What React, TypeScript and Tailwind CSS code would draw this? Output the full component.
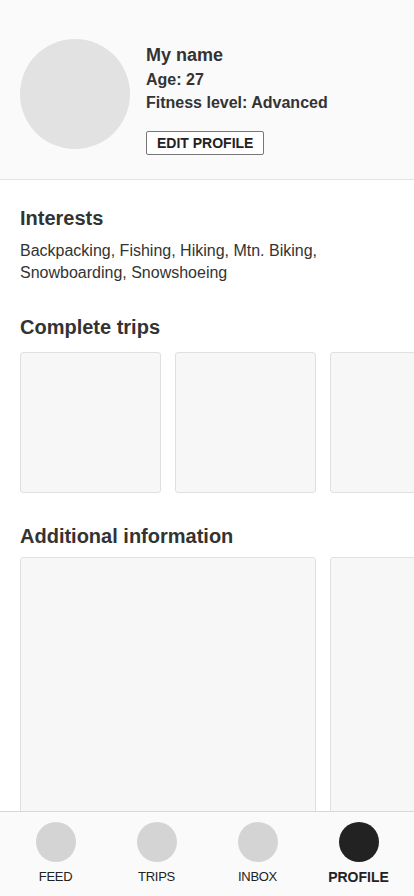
const font = { fontFamily: '"Liberation Sans", Arial, sans-serif' };

function NavItem({ label, active }: { label: string; active?: boolean }) {
  return (
    <div className="flex flex-col items-center">
      <div className={`w-10 h-10 rounded-full ${active ? 'bg-[#222222]' : 'bg-[#d4d4d4]'}`} />
      <span
        className={`mt-[7px] leading-[16px] text-[#222222] ${active ? 'text-[14px] font-bold' : 'text-[13px] font-normal tracking-[-0.3px]'}`}
      >
        {label}
      </span>
    </div>
  );
}

export default function App() {
  const trips = [1, 2, 3];
  const extras = [1, 2];

  return (
    <div className="h-[896px] w-[414px] flex flex-col overflow-hidden bg-white text-[#333333]" style={font}>
      <div className="flex-1 overflow-hidden">
        <header className="h-[180px] bg-[#fafafa] border-b border-[#e2e2e2] pt-[39px] px-5 flex items-start gap-4">
          <div className="w-[110px] h-[110px] rounded-full bg-[#e2e2e2] shrink-0" />
          <div className="mt-[5px] flex flex-col items-start">
            <h1 className="text-[18px] leading-[22px] font-bold">My name</h1>
            <p className="mt-[2px] text-[16px] leading-[23px] font-bold">Age: 27</p>
            <p className="text-[16px] leading-[23px] font-bold">Fitness level: Advanced</p>
            <button className="mt-[17px] h-6 px-[10px] border border-[#777777] rounded-[2px] bg-white text-[14px] font-bold leading-none text-[#222222]">
              EDIT PROFILE
            </button>
          </div>
        </header>

        <section className="px-5 pt-[26px]">
          <h2 className="text-[20px] leading-6 font-bold">Interests</h2>
          <p className="mt-[10px] text-[16px] leading-[22px] text-[#333333]">
            Backpacking, Fishing, Hiking, Mtn. Biking,
            <br />
            Snowboarding, Snowshoeing
          </p>
        </section>

        <section className="pt-[31px]">
          <h2 className="px-5 text-[20px] leading-6 font-bold">Complete trips</h2>
          <div className="mt-[13px] pl-5 flex gap-[14px] overflow-hidden">
            {trips.map((t) => (
              <div key={t} className="w-[141px] h-[141px] shrink-0 rounded-[3px] border border-[#e0e0e0] bg-[#f7f7f7]" />
            ))}
          </div>
        </section>

        <section className="pt-[31px]">
          <h2 className="px-5 text-[20px] leading-6 font-bold">Additional information</h2>
          <div className="mt-[9px] pl-5 flex gap-[14px] overflow-hidden">
            {extras.map((e) => (
              <div key={e} className="w-[296px] h-[296px] shrink-0 rounded-[3px] border border-[#e0e0e0] bg-[#f7f7f7]" />
            ))}
          </div>
        </section>
      </div>

      <nav className="h-[85px] shrink-0 bg-[#fafafa] border-t border-[#d8d8d8] pt-[10px] px-[5px] grid grid-cols-4">
        <NavItem label="FEED" />
        <NavItem label="TRIPS" />
        <NavItem label="INBOX" />
        <NavItem label="PROFILE" active />
      </nav>
    </div>
  );
}
